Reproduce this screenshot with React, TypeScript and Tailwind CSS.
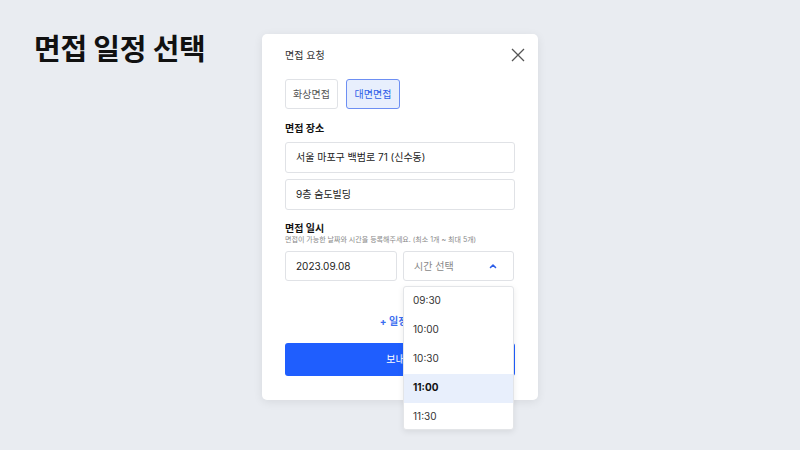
import React from "react";

const font = { fontFamily: 'Inter, "Noto Sans CJK KR", sans-serif' };

export default function App() {
  const times = ["09:30", "10:00", "10:30", "11:00", "11:30"];
  return (
    <div className="w-[800px] h-[450px] bg-[#e9ecf1] relative overflow-hidden flex" style={font}>
      <div className="pl-[34px] pt-[31px] w-[262px] shrink-0">
        <h1 className="text-[29px] font-bold text-[#111] tracking-[-0.3px] leading-[38px]">면접 일정 선택</h1>
      </div>
      <div className="mt-[34px] w-[276px] h-[366px] bg-white rounded-[5px] shadow-[0_2px_10px_rgba(0,0,0,0.08)] px-[23px] pt-[14px] relative">
        <div className="flex items-center justify-between h-[14px]">
          <span className="text-[10px] text-[#333]">면접 요청</span>
          <svg width="14" height="14" viewBox="0 0 14 14" className="mr-[-10px]">
            <path d="M1 1L13 13M13 1L1 13" stroke="#555" strokeWidth="1.3" />
          </svg>
        </div>
        <div className="flex gap-[8px] mt-[17px]">
          <div className="w-[53px] h-[30px] border border-[#e0e2e6] rounded-[3px] flex items-center justify-center text-[10px] text-[#555]">화상면접</div>
          <div className="w-[54px] h-[30px] border border-[#6d8ff3] bg-[#e8effd] rounded-[3px] flex items-center justify-center text-[10px] text-[#2d5ee8]">대면면접</div>
        </div>
        <div className="mt-[12px] text-[10px] font-bold text-[#111] leading-[14px]">면접 장소</div>
        <div className="mt-[7px] h-[31px] border border-[#e0e2e6] rounded-[3px] flex items-center px-[10px] text-[10px] text-[#222]">서울 마포구 백범로 71 (신수동)</div>
        <div className="mt-[6px] h-[31px] border border-[#e0e2e6] rounded-[3px] flex items-center px-[10px] text-[10px] text-[#222]">9층 숨도빌딩</div>
        <div className="mt-[11px] text-[10px] font-bold text-[#111] leading-[14px]">면접 일시</div>
        <div className="text-[7px] text-[#888] leading-[10px]">면접이 가능한 날짜와 시간을 등록해주세요. (최소 1개 ~ 최대 5개)</div>
        <div className="mt-[6px] flex gap-[6px]">
          <div className="w-[112px] h-[30px] border border-[#e0e2e6] rounded-[3px] flex items-center px-[10px] text-[10px] text-[#222]">2023.09.08</div>
          <div className="w-[111px] h-[30px] border border-[#e0e2e6] rounded-[3px] flex items-center justify-between px-[10px] text-[10px] text-[#888]">
            <span>시간 선택</span>
            <svg width="8" height="6" viewBox="0 0 8 6" className="mr-[6px]">
              <path d="M1.5 4.5L4 2L6.5 4.5" stroke="#2d5ee8" strokeWidth="1.6" fill="none" strokeLinecap="round" strokeLinejoin="round" />
            </svg>
          </div>
        </div>
        <div className="mt-[33px] flex justify-center text-[10px] font-bold text-[#3b6ef0] leading-[14px]">
          <span className="ml-[8px]">+ 일정 추가</span>
        </div>
        <div className="mt-[15px] h-[33px] bg-[#1f5efe] rounded-[3px] flex items-center justify-center text-[10px] text-white">보내기</div>
        <div className="absolute left-[141px] top-[252px] w-[111px] h-[144px] bg-white border border-[#e3e5e8] rounded-[3px] shadow-[0_2px_6px_rgba(0,0,0,0.08)] overflow-hidden">
          {times.map((t) => (
            <div
              key={t}
              className={
                t === "11:00"
                  ? "h-[29px] flex items-center px-[9px] pb-[3px] text-[10px] font-bold text-[#111] bg-[#e8effc]"
                  : "h-[29px] flex items-center px-[9px] pb-[3px] text-[10px] text-[#333]"
              }
            >
              {t}
            </div>
          ))}
        </div>
      </div>
    </div>
  );
}
